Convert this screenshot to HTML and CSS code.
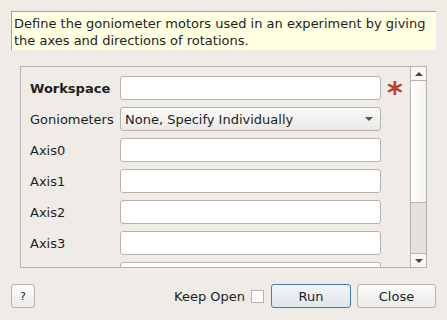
FILE: index.html
```html
<!DOCTYPE html>
<html lang="en">
<head>
    <meta charset="UTF-8">
    <title>SetGoniometer</title>
    <link rel="stylesheet" href="styles.css">
</head>
<body>
    <div class="dialog">
        <div class="description">Define the goniometer motors used in an experiment by giving the axes and directions of rotations.</div>

        <div class="panel">
            <div class="form">
                <div class="row">
                    <label class="bold">Workspace</label>
                    <input type="text" class="field">
                    <span class="required">*</span>
                </div>
                <div class="row">
                    <label>Goniometers</label>
                    <div class="combo">
                        <span>None, Specify Individually</span>
                        <span class="arrow"></span>
                    </div>
                </div>
                <div class="row">
                    <label>Axis0</label>
                    <input type="text" class="field">
                </div>
                <div class="row">
                    <label>Axis1</label>
                    <input type="text" class="field">
                </div>
                <div class="row">
                    <label>Axis2</label>
                    <input type="text" class="field">
                </div>
                <div class="row">
                    <label>Axis3</label>
                    <input type="text" class="field">
                </div>
                <div class="row">
                    <label></label>
                    <input type="text" class="field">
                </div>
            </div>
            <div class="scrollbar">
                <div class="step up"><span></span></div>
                <div class="track">
                    <div class="handle"></div>
                </div>
                <div class="step down"><span></span></div>
            </div>
        </div>

        <div class="buttons">
            <button class="btn help">?</button>
            <div class="spacer"></div>
            <span class="keep">Keep Open</span>
            <span class="check"></span>
            <button class="btn run">Run</button>
            <button class="btn close">Close</button>
        </div>
    </div>
</body>
</html>
```

FILE: styles.css
```css
:root {
    --bg: #efebe7;
    --border: #b6b2ac;
    --text: #1e1e1e;
}

body {
    margin: 0;
    background-color: var(--bg);
    font-family: 'DejaVu Sans', sans-serif;
    font-size: 13px;
    color: var(--text);
}

.dialog {
    height: 320px;
    overflow: hidden;
    display: flex;
    flex-direction: column;
}

.description {
    margin: 11px 11px 0 11px;
    height: 39px;
    padding: 3px 0 0 2px;
    box-sizing: border-box;
    background-color: #ffffe1;
    border-top: 1px solid #a8a49e;
    border-left: 1px solid #a8a49e;
    line-height: 17px;
}

.panel {
    margin: 16px 20px 0 20px;
    height: 202px;
    border: 1px solid var(--border);
    display: flex;
    box-sizing: border-box;
}

.form {
    flex: 1;
    overflow: hidden;
    padding: 9px 0 0 9px;
    display: flex;
    flex-direction: column;
    gap: 7px;
}

.row {
    display: flex;
    align-items: center;
    height: 24px;
    flex-shrink: 0;
}

.row label {
    width: 90px;
    flex-shrink: 0;
}

.bold {
    font-weight: bold;
}

.field {
    width: 261px;
    height: 24px;
    box-sizing: border-box;
    border: 1px solid var(--border);
    border-radius: 3px;
    background-color: #ffffff;
    margin: 0;
    padding: 0 4px;
    font-family: 'DejaVu Sans', sans-serif;
    font-size: 13px;
}

.required {
    color: #b8402c;
    font-size: 30px;
    font-weight: bold;
    line-height: 24px;
    margin: 9px 0 0 6px;
    height: 24px;
}

.combo {
    width: 261px;
    height: 24px;
    box-sizing: border-box;
    border: 1px solid var(--border);
    border-radius: 3px;
    background: linear-gradient(#fbfbfa, #ebe9e6);
    display: flex;
    align-items: center;
    justify-content: space-between;
    padding: 0 5px 0 4px;
}

.arrow {
    width: 0;
    height: 0;
    border-left: 4px solid transparent;
    border-right: 4px solid transparent;
    border-top: 4px solid #555555;
    margin-right: 2px;
}

.scrollbar {
    width: 15px;
    border-left: 1px solid var(--border);
    display: flex;
    flex-direction: column;
}

.step {
    height: 13px;
    background-color: #f7f6f4;
    display: flex;
    align-items: center;
    justify-content: center;
    flex-shrink: 0;
}

.step span {
    width: 0;
    height: 0;
    border-left: 4px solid transparent;
    border-right: 4px solid transparent;
}

.up {
    border-bottom: 1px solid var(--border);
}

.up span {
    border-bottom: 4px solid #444444;
}

.down {
    border-top: 1px solid var(--border);
}

.down span {
    border-top: 4px solid #444444;
}

.track {
    flex: 1;
    background-color: #e2e1de;
}

.handle {
    height: 121px;
    background: linear-gradient(to right, #ffffff, #f3f2f0);
    border-bottom: 1px solid var(--border);
}

.buttons {
    display: flex;
    align-items: center;
    margin: 16px 11px 0 11px;
    height: 24px;
}

.spacer {
    flex: 1;
}

.btn {
    height: 24px;
    box-sizing: border-box;
    border: 1px solid var(--border);
    border-radius: 3px;
    background: linear-gradient(#fbfbfa, #ecebe8);
    font-family: 'DejaVu Sans', sans-serif;
    font-size: 13px;
    color: var(--text);
    padding: 0;
}

.help {
    width: 24px;
    font-size: 11px;
}

.keep {
    margin-right: 6px;
}

.check {
    width: 13px;
    height: 13px;
    box-sizing: border-box;
    border: 1px solid var(--border);
    background-color: #ffffff;
    margin-right: 7px;
}

.run {
    width: 80px;
    border-color: #3f7cb4;
    background: linear-gradient(#f4f6f8, #dfe5ea);
    margin-right: 6px;
}

.close {
    width: 79px;
}
```
